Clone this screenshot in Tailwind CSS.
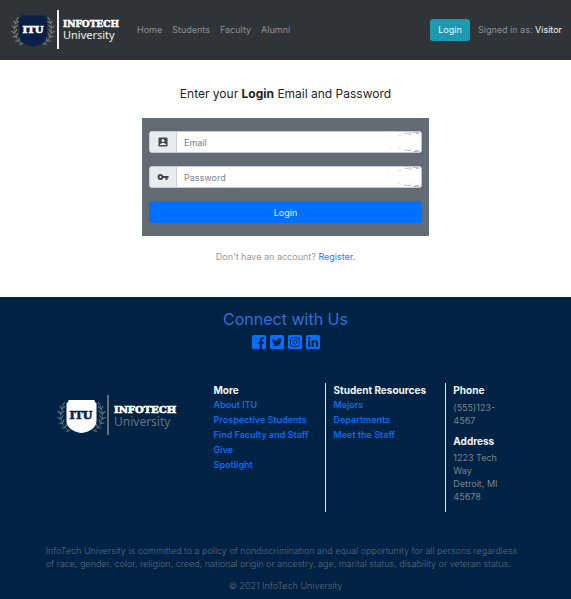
<!DOCTYPE html>
<html lang="en">
<head>
<meta charset="utf-8">
<meta name="viewport" content="width=device-width, initial-scale=1">
<title>InfoTech University - Login</title>
<script src="https://cdn.jsdelivr.net/npm/@tailwindcss/browser@4"></script>
</head>
<body class="flex min-h-screen flex-col bg-[#002244] font-[Inter,'Noto_Sans',sans-serif] text-[9px] leading-[13px]">

<svg class="hidden" aria-hidden="true">
  <symbol id="laurel" viewBox="0 0 14 30">
    <path d="M13 28.500C4 26 1 14 6 3" fill="none" stroke="currentColor" stroke-width=".7"/>
    <g fill="none" stroke="currentColor" stroke-width="1.100" stroke-linecap="round">
      <path d="M6 3l1.500-2.500M4.800 7L3 4M3.800 12L1 9.500M3.800 17L.700 15.500M5.500 21.500L2 21M8.500 25.500L5 26M12.500 28.500L9.500 29.500"/>
      <path d="M4.800 7l3-2.500M3.800 12l3-3M3.800 17l2.500-3.500M5.500 21.500l1.500-4M8.500 25.500l1-3.500"/>
    </g>
  </symbol>
  <symbol id="shield" viewBox="0 0 30 33">
    <path d="M2 0h26c0 2 1 3 2 3v18c0 7-7 11-15 12C7 32 0 28 0 21V3c1 0 2-1 2-3z" fill="currentColor"/>
  </symbol>
  <symbol id="scuffs" viewBox="0 0 36 20">
    <g fill="none">
      <path d="M20 1.500l4-.5h3M28 .500h6M31 1.500h3M19 18l4 .500h3M28 19.500h6M30 18.500h4" stroke="#aab0b6" stroke-width=".8"/>
      <path d="M2 4h1M5 16h1M13 4l3-1M13 16l3 1M24 2.500h3M25 17h2" stroke="#d5d8dc" stroke-width=".8"/>
    </g>
  </symbol>
</svg>

<header class="flex h-[60px] items-center border-b-4 border-[#2d2f33] bg-[#2f3438] pt-[3px] pr-[9px] pl-[11px]">
  <a href="#" aria-label="InfoTech University home" class="shrink-0">
    <svg class="h-10 w-[114px]" viewBox="0 0 114 40">
      <g color="#7d8183">
        <use href="#laurel" x="0" y="7" width="13" height="28"/>
        <use href="#laurel" x="0" y="7" width="13" height="28" transform="translate(44 0) scale(-1 1)"/>
      </g>
      <use href="#shield" x="8" y="5" width="28" height="32" color="#0b1f49"/>
      <text x="22" y="23" text-anchor="middle" font-family="DejaVu Serif, serif" font-weight="700" font-size="10" fill="#fff" stroke="#fff" stroke-width=".7">ITU</text>
      <path d="M46 0h2v39h-2z" fill="#f0f0f0"/>
      <text x="52" y="17" font-family="DejaVu Serif, serif" font-weight="700" font-size="9" fill="#fff" stroke="#fff" stroke-width=".6">INFOTECH</text>
      <text x="52" y="29" font-family="Noto Sans, sans-serif" font-size="11" fill="#f0f0f0">University</text>
    </svg>
  </a>
  <nav class="ml-3 flex gap-[10px] text-[#8d9194]">
    <a href="#">Home</a>
    <a href="#">Students</a>
    <a href="#">Faculty</a>
    <a href="#">Alumni</a>
  </nav>
  <button type="button" class="ml-auto h-[22px] w-10 shrink-0 rounded-[3px] bg-[#1b9ab1] text-[#e8f6f8]">Login</button>
  <p class="ml-2 whitespace-nowrap text-[#8d9194]">Signed in as: <span class="text-[#f4f4f4]">Visitor</span></p>
</header>

<main class="flex flex-col items-center bg-white pt-[25px] pb-[34px]">
  <h1 class="text-[12px] leading-[18px] text-[#212529]">Enter your <b class="font-bold">Login</b> Email and Password</h1>
  <form class="mt-[15px] flex w-full max-w-[287px] flex-col gap-[13px] bg-[#636b74] px-[7px] py-[13px]">
    <div class="relative flex h-[22px] overflow-hidden rounded-[3px] border border-[#c3cad4] bg-white">
      <label for="email" aria-label="Email" class="flex w-[27px] shrink-0 items-center justify-center border-r border-[#ced4da] bg-[#e9ecef]">
        <svg class="size-[12px]" viewBox="0 0 24 24" fill="#3f474f" aria-hidden="true"><path d="M5 3h14a2 2 0 0 1 2 2v14a2 2 0 0 1-2 2H5a2 2 0 0 1-2-2V5a2 2 0 0 1 2-2zm7 3a3 3 0 1 0 0 6 3 3 0 0 0 0-6zm6 11c0-2-4-3.200-6-3.200S6 15 6 17v1h12z"/></svg>
      </label>
      <input id="email" type="email" placeholder="Email" class="min-w-0 flex-1 px-[7px] outline-none placeholder:text-[#7b8289]">
      <svg class="pointer-events-none absolute top-0 right-0 h-5 w-9" aria-hidden="true"><use href="#scuffs"/></svg>
    </div>
    <div class="relative flex h-[22px] overflow-hidden rounded-[3px] border border-[#c3cad4] bg-white">
      <label for="password" aria-label="Password" class="flex w-[27px] shrink-0 items-center justify-center border-r border-[#ced4da] bg-[#e9ecef]">
        <svg class="size-[12px]" viewBox="0 0 24 24" fill="#3f474f" aria-hidden="true"><path d="M12.650 10A6 6 0 1 0 12.650 14H17v4h4v-4h2v-4zM7 14a2 2 0 1 1 0-4 2 2 0 0 1 0 4z"/></svg>
      </label>
      <input id="password" type="password" placeholder="Password" class="min-w-0 flex-1 px-[7px] outline-none placeholder:text-[#7b8289]">
      <svg class="pointer-events-none absolute top-0 right-0 h-5 w-9" aria-hidden="true"><use href="#scuffs"/></svg>
    </div>
    <button type="submit" class="h-[22px] rounded-[3px] bg-[#0070ff] text-[#e4f0ff]">Login</button>
  </form>
  <p class="mt-[14px] text-[#999]">Don't have an account? <a href="#" class="text-[#1a7cf5]">Register.</a></p>
</main>

<footer class="flex-1 pt-[10px] pb-[6px]">
  <h2 class="text-center text-[16px] leading-6 text-[#2f72d3]">Connect with Us</h2>
  <div class="mt-1 flex justify-center gap-1 text-[#0070ff]">
    <a href="#" aria-label="Facebook"><svg class="size-[14px]" viewBox="0 0 14 14"><rect width="14" height="14" rx="1.500" fill="currentColor"/><path d="M7.700 14V8.900H5.800V6.800h1.900V5.200C7.700 3.200 8.800 2.200 10.500 2.200l1.500.1v1.900h-.9c-.9 0-1.200.5-1.200 1.200v1.400h2L11.600 8.900H9.900V14z" fill="#002244"/></svg></a>
    <a href="#" aria-label="Twitter"><svg class="size-[14px]" viewBox="0 0 14 14"><rect width="14" height="14" rx="1.500" fill="currentColor"/><path d="M12 4l-1.200.3c.4-.3.700-.6.900-1l-1.300.5a2.100 2.100 0 0 0-3.500 1.900C5.200 5.600 3.700 4.800 2.600 3.500c-.5 1-.2 2.100.7 2.700l-.9-.2c0 1 .7 1.800 1.600 2l-.9.100c.3.800 1 1.400 1.900 1.400-.9.700-1.900 1-3 .9 1 .6 2 .9 3.200.9 3.900 0 6-3.200 5.900-6.200L12 4z" fill="#002244"/></svg></a>
    <a href="#" aria-label="Instagram"><svg class="size-[14px]" viewBox="0 0 14 14"><rect width="14" height="14" rx="1.500" fill="currentColor"/><g fill="none" stroke="#002244"><rect x="2.500" y="2.500" width="9" height="9" rx="2.500"/><circle cx="7" cy="7" r="2.100"/></g><circle cx="9.700" cy="4.300" r=".6" fill="#002244"/></svg></a>
    <a href="#" aria-label="LinkedIn"><svg class="size-[14px]" viewBox="0 0 14 14"><rect width="14" height="14" rx="1.500" fill="currentColor"/><g fill="#002244"><circle cx="3.200" cy="3.300" r="1.200"/><path d="M2.100 5.300h2.100V12H2.100zM5.500 5.300h2v.9c.4-.7 1.100-1.100 2-1.100 2 0 2.500 1.300 2.500 3.100V12H9.900V8.700c0-.9-.1-1.800-1.100-1.800s-1.200.8-1.200 1.700V12H5.500z"/></g></svg></a>
  </div>

  <div class="mt-[34px] grid grid-cols-[36%_21%_21%_1fr]">
    <a href="#" aria-label="InfoTech University home" class="mt-3 mr-[19px] h-10 justify-self-end">
      <svg class="h-10 w-[130px]" viewBox="0 0 130 40">
        <g color="#656f7c">
          <use href="#laurel" x="0" y="7" width="14" height="30"/>
          <use href="#laurel" x="0" y="7" width="14" height="30" transform="translate(49 0) scale(-1 1)"/>
        </g>
        <use href="#shield" x="9" y="5" width="31" height="33" color="#fff"/>
        <text x="24" y="24" text-anchor="middle" font-family="DejaVu Serif, serif" font-weight="700" font-size="11" fill="#0b1f49" stroke="#0b1f49" stroke-width=".7">ITU</text>
        <path d="M50 0h2v40h-2z" fill="#646c76"/>
        <text x="57" y="18" font-family="DejaVu Serif, serif" font-weight="700" font-size="10" fill="#fff" stroke="#fff" stroke-width=".7">INFOTECH</text>
        <text x="57" y="31" font-family="Noto Sans, sans-serif" font-size="12" fill="#69717b">University</text>
      </svg>
    </a>
    <section class="h-[129px] pl-2">
      <h3 class="text-[10px] leading-[14px] font-bold text-[#f4f6f8]">More</h3>
      <ul class="whitespace-nowrap leading-[15px] font-semibold text-[#066bf2]">
        <li><a href="#">About ITU</a></li>
        <li><a href="#">Prospective Students</a></li>
        <li><a href="#">Find Faculty and Staff</a></li>
        <li><a href="#">Give</a></li>
        <li><a href="#">Spotlight</a></li>
      </ul>
    </section>
    <section class="border-l border-[#e8ecf0] pl-[7px]">
      <h3 class="whitespace-nowrap text-[10px] leading-[14px] font-bold text-[#f4f6f8]">Student Resources</h3>
      <ul class="whitespace-nowrap leading-[15px] font-semibold text-[#066bf2]">
        <li><a href="#">Majors</a></li>
        <li><a href="#">Departments</a></li>
        <li><a href="#">Meet the Staff</a></li>
      </ul>
    </section>
    <section class="border-l border-[#e8ecf0] pl-[7px] text-[#7c8489]">
      <h3 class="text-[10px] leading-[14px] font-bold text-[#f4f6f8]">Phone</h3>
      <p class="mt-1">(555)123-<br>4567</p>
      <h3 class="mt-[7px] text-[10px] leading-[14px] font-bold text-[#f4f6f8]">Address</h3>
      <p class="mt-[3px] whitespace-nowrap">1223 Tech<br>Way<br>Detroit, MI<br>45678</p>
    </section>
  </div>

  <div class="mt-8 px-[8%] font-light text-[#5d6b7a]">
    <p>InfoTech University is committed to a policy of nondiscrimination and equal opportunity for all persons regardless of race, gender, color, religion, creed, national origin or ancestry, age, marital status, disability or veteran status.</p>
    <p class="mt-[9px] text-center">© 2021 InfoTech University</p>
  </div>
</footer>
</body>
</html>
